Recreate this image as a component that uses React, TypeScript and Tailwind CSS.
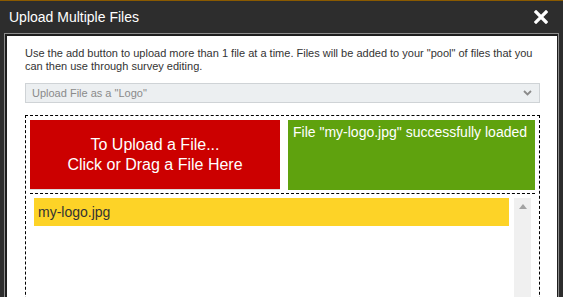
export default function App() {
  return (
    <div className="w-[563px] h-[297px] overflow-hidden bg-[#2d2d2d] border-t border-[#8a5a00] font-['Liberation_Sans',Arial,sans-serif] flex flex-col">
      {/* Title bar */}
      <div className="h-[32px] shrink-0 flex items-center justify-between pl-[9px] pr-[15px]">
        <span className="text-[14px] text-white">Upload Multiple Files</span>
        <svg width="14" height="14" viewBox="0 0 14 14">
          <path d="M2 2 L12 12 M12 2 L2 12" stroke="#fff" strokeWidth="3.2" strokeLinecap="square" />
        </svg>
      </div>

      {/* Body */}
      <div className="mx-[4px] flex-1 border border-[#8c8c8c] bg-[#1e1e1e] pl-[2px] pr-[1px] pt-[2px]">
        <div className="h-full bg-white pl-[18px] pr-[17px] pt-[11px]">
          <p className="text-[11px] leading-[13px] text-[#333]">
            Use the add button to upload more than 1 file at a time. Files will be added to your "pool" of files that you can then use through survey editing.
          </p>

          <div className="mt-[10px] h-[20px] bg-[#eceff1] border border-[#cfd3d6] flex items-center justify-between pl-[6px] pr-[7px]">
            <span className="text-[11px] text-[#8a8a8a]">Upload File as a "Logo"</span>
            <svg width="9" height="6" viewBox="0 0 9 6">
              <path d="M1 1 L4.5 4.5 L8 1" fill="none" stroke="#8a8a8a" strokeWidth="1.8" />
            </svg>
          </div>

          <div className="mt-[12px] border border-dashed border-black p-[4px] h-[200px]">
            <div className="flex gap-[8px] h-[71px]">
              <div className="w-[250px] h-[70px] bg-[#cc0000] border-b border-[#dcdcdc] flex flex-col items-center justify-center text-white text-[16px] leading-[20px]">
                <span>To Upload a File...</span>
                <span>Click or Drag a File Here</span>
              </div>
              <div className="flex-1 h-[70px] bg-[#5fa20e] text-white text-[14px] leading-[16px] pl-[5px] pt-[4px]">
                File "my-logo.jpg" successfully loaded
              </div>
            </div>

            <div className="mt-[2px] border-t border-dashed border-black pt-[4px] flex h-full">
              <div className="flex-1 ml-[4px] h-[28px] bg-[#fdd327] text-[14px] text-[#333] pl-[4px] flex items-center">
                my-logo.jpg
              </div>
              <div className="w-[17px] ml-[5px] mr-[4px] bg-[#f0f0f0] flex justify-center pt-[6px]">
                <svg width="8" height="5" viewBox="0 0 8 5">
                  <path d="M0 5 L4 0 L8 5 Z" fill="#a3a3a3" />
                </svg>
              </div>
            </div>
          </div>
        </div>
      </div>
    </div>
  );
}
